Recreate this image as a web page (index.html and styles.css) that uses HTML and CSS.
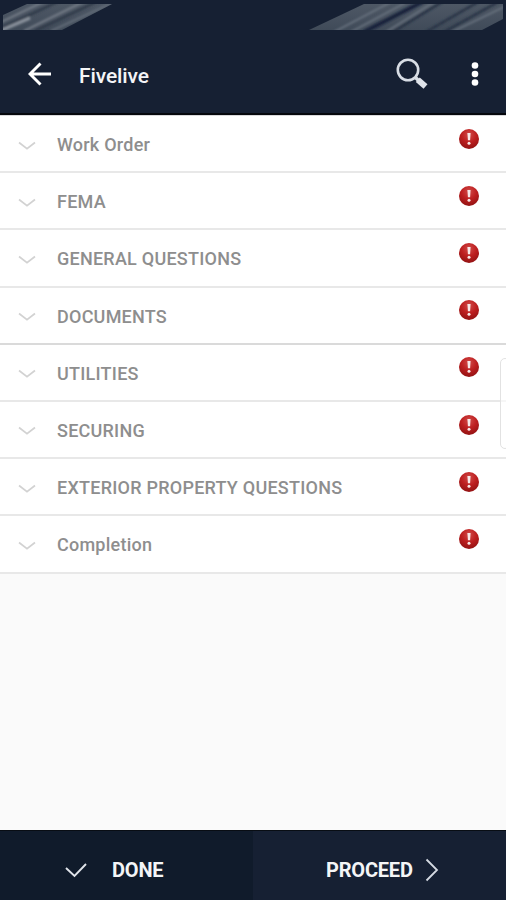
FILE: index.html
```html
<!DOCTYPE html>
<html lang="en">
<head>
<meta charset="utf-8">
<title>Fivelive</title>
<link rel="stylesheet" href="styles.css">
</head>
<body>
<svg class="defs" width="0" height="0" aria-hidden="true">
  <defs>
    <radialGradient id="red" cx="50%" cy="28%" r="75%">
      <stop offset="0" stop-color="#d14a48"/><stop offset=".5" stop-color="#bd1f20"/><stop offset="1" stop-color="#8f1112"/>
    </radialGradient>
    <linearGradient id="sheen" x1="0" y1="0" x2="0" y2="1">
      <stop offset="0" stop-color="#505a67"/><stop offset="1" stop-color="#3f4a58"/>
    </linearGradient>
    <filter id="soft" x="-10%" y="-30%" width="120%" height="160%"><feGaussianBlur stdDeviation="1.1"/></filter>
    <filter id="edge" x="-5%" y="-5%" width="110%" height="110%"><feGaussianBlur stdDeviation="0.4"/></filter>
    <clipPath id="left"><path d="M3 15 27 4H112L62 30H3Z"/></clipPath>
    <clipPath id="right"><path d="M309 30 364 4H503V19L482 30Z"/></clipPath>
    <symbol id="chevron" viewBox="0 0 18 10"><path d="M1 1.500 9 7.700 17 1.500" fill="none" stroke="#d2d2d2" stroke-width="1.700"/></symbol>
    <symbol id="alert" viewBox="0 0 22 22">
      <circle cx="11" cy="11" r="10" fill="url(#red)"/>
      <path d="M9.400 5h3.200l-.5 7.300H9.900Z" fill="#f7e9e9"/><circle cx="11" cy="15.200" r="1.500" fill="#f7e9e9"/>
    </symbol>
  </defs>
</svg>
<div class="app">
  <header class="header">
    <svg class="status" viewBox="0 0 506 32">
      <g clip-path="url(#left)">
        <rect width="120" height="32" fill="url(#sheen)"/>
        <g filter="url(#soft)" fill="none">
          <path d="M-5 25 45 1M24 31 85 1" stroke="#747c87" stroke-width="2"/>
          <path d="M2 28 59 1M35 31 98 1" stroke="#303b4a" stroke-width="2.500"/>
          <path d="M-5 33 30 18" stroke="#8b939d" stroke-width="3"/>
          <path d="M51 31 112 3" stroke="#626c78" stroke-width="2"/>
        </g>
      </g>
      <g clip-path="url(#right)">
        <rect x="300" width="206" height="32" fill="url(#sheen)"/>
        <g filter="url(#soft)" fill="none">
          <path d="M364 32 424 1" stroke="#17243a" stroke-width="4"/>
          <path d="M393 32 442 2M426 32 478 2M444 32 498 2" stroke="#273344" stroke-width="2.500"/>
          <path d="M334 32 391 2M351 32 405 3M386 32 434 2M452 32 506 6" stroke="#6b7581" stroke-width="1.600"/>
        </g>
      </g>
    </svg>
    <div class="toolbar">
      <svg class="back" viewBox="0 0 24 24"><path d="M23 12H2M12.500 1.500 2 12l10.500 10.500" fill="none" stroke="#fff" stroke-width="2.900"/></svg>
      <h1 class="title">Fivelive</h1>
      <svg class="search" viewBox="0 0 34 34"><circle cx="13" cy="13" r="10.200" fill="none" stroke="#d8dde5" stroke-width="2.600"/><path d="m20.500 20.500 3 3" stroke="#d8dde5" stroke-width="3.500"/><path d="m22.800 22.800 7.700 6.700" stroke="#dfe3ea" stroke-width="6"/></svg>
      <svg class="more" viewBox="0 0 8 26"><g fill="#fff"><circle cx="4" cy="4.500" r="3.300"/><circle cx="4" cy="13" r="3.300"/><circle cx="4" cy="21.500" r="3.300"/></g></svg>
    </div>
  </header>
  <main class="list">
    <div class="row"><svg class="chevron"><use href="#chevron"/></svg><span class="label">Work Order</span><svg class="alert"><use href="#alert"/></svg></div>
    <div class="row"><svg class="chevron"><use href="#chevron"/></svg><span class="label">FEMA</span><svg class="alert"><use href="#alert"/></svg></div>
    <div class="row"><svg class="chevron"><use href="#chevron"/></svg><span class="label">GENERAL QUESTIONS</span><svg class="alert"><use href="#alert"/></svg></div>
    <div class="row strong"><svg class="chevron"><use href="#chevron"/></svg><span class="label">DOCUMENTS</span><svg class="alert"><use href="#alert"/></svg></div>
    <div class="row"><svg class="chevron"><use href="#chevron"/></svg><span class="label">UTILITIES</span><svg class="alert"><use href="#alert"/></svg></div>
    <div class="row"><svg class="chevron"><use href="#chevron"/></svg><span class="label">SECURING</span><svg class="alert"><use href="#alert"/></svg></div>
    <div class="row"><svg class="chevron"><use href="#chevron"/></svg><span class="label">EXTERIOR PROPERTY QUESTIONS</span><svg class="alert"><use href="#alert"/></svg></div>
    <div class="row"><svg class="chevron"><use href="#chevron"/></svg><span class="label">Completion</span><svg class="alert"><use href="#alert"/></svg></div>
    <div class="edge-handle"></div>
  </main>
  <footer class="footer">
    <div class="action done"><svg class="check" viewBox="0 0 24 17"><path d="m2 6 8.500 8L22 2" fill="none" stroke="#e0e4ea" stroke-width="1.900"/></svg><span class="action-text">DONE</span></div>
    <div class="action proceed"><span class="action-text">PROCEED</span><svg class="next" viewBox="0 0 14 24"><path d="m1.500 1.500 10.500 10.500-10.500 10.500" fill="none" stroke="#d5dae2" stroke-width="1.800"/></svg></div>
  </footer>
</div>
</body>
</html>
```
FILE: styles.css
```css
* { box-sizing: border-box; }
body { margin: 0; font-family: Roboto, "Liberation Sans", sans-serif; background: #fafafa; }
svg { display: block; flex: none; }
.defs { position: absolute; }
.app { width: 506px; height: 900px; display: flex; flex-direction: column; overflow: hidden; }
.header { height: 115px; background: #162033; border-bottom: 2px solid #05070c; }
.status { width: 506px; height: 32px; }
.toolbar { height: 84px; display: flex; align-items: center; padding: 0 27px 0 28px; }
.back { width: 24px; height: 24px; }
.title { margin: 3px 0 0 27px; flex: 1; color: #f4f5f7; font-size: 21px; line-height: 26px; font-weight: 500; letter-spacing: -0.1px; }
.search { width: 34px; height: 34px; margin-right: 42px; }
.more { width: 8px; height: 26px; }
.list { position: relative; flex: 1; border-top: 1px solid #d9d9db; }
.row { height: 57.2px; display: flex; align-items: flex-start; background: #fff; border-bottom: 2px solid #e8e8e8; padding: 0 26px 0 18px; }
.row.strong { border-bottom-color: #dadada; }
.chevron { width: 18px; height: 10px; margin-top: 24.5px; }
.label { margin: 18px 0 0 21px; flex: 1; color: #8e8e8e; font-size: 18px; line-height: 22px; font-weight: 500; letter-spacing: 0.24px; white-space: nowrap; }
.alert { width: 22px; height: 22px; margin-top: 11.7px; }
.edge-handle { position: absolute; right: -4px; top: 242px; width: 10px; height: 91px; border: 1px solid #e2e2e2; border-radius: 5px; background: rgba(255,255,255,.6); }
.footer { height: 70px; display: flex; border-top: 1px solid #080d14; }
.action { display: flex; align-items: center; color: #f4f5f7; padding-top: 9px; }
.action-text { font-size: 20px; font-weight: 700; line-height: 24px; letter-spacing: -0.2px; }
.done { width: 253px; background: #101b2b; padding-left: 64px; }
.proceed { flex: 1; background: #162033; padding-left: 73px; }
.check { width: 24px; height: 17px; margin-right: 24px; }
.next { width: 14px; height: 24px; margin-left: 12px; }
```
